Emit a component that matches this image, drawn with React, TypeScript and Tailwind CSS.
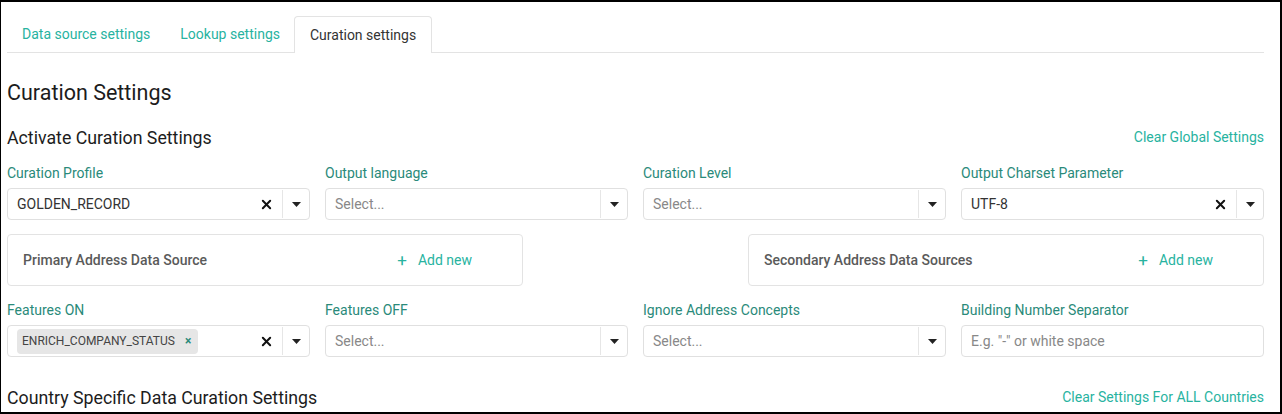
import React from 'react';

const ClearX = () => (
  <svg width="11" height="11" viewBox="0 0 12 12">
    <path d="M2 2 L10 10 M10 2 L2 10" stroke="#111" strokeWidth="2.2" strokeLinecap="round" />
  </svg>
);

const Caret = () => (
  <svg width="9" height="5" viewBox="0 0 9 5">
    <path d="M0 0 H9 L4.5 5 Z" fill="#222" />
  </svg>
);

type SelectProps = {
  value?: string;
  chip?: string;
  clearable?: boolean;
};

const SelectBox: React.FC<SelectProps> = ({ value, chip, clearable }) => (
  <div className="flex h-[32px] items-stretch rounded border border-[#e0e0e0] bg-white">
    <div className="flex flex-1 items-center px-[9px] text-[14px]">
      {chip ? (
        <span className="flex h-[25px] items-center gap-[10px] rounded-sm bg-[#e6e6e6] pl-[5px] pr-[7px] text-[12px] text-[#444]">
          {chip}
          <span className="text-[12px] font-bold text-[#2a8a7a]">×</span>
        </span>
      ) : value ? (
        <span className="text-[#333]">{value}</span>
      ) : (
        <span className="text-[#888]">Select...</span>
      )}
    </div>
    {clearable && (
      <div className="flex w-[32px] items-center justify-center">
        <ClearX />
      </div>
    )}
    <div className="my-[1px] flex w-[27px] items-center justify-center border-l border-[#e6e6e6]">
      <Caret />
    </div>
  </div>
);

const Label: React.FC<{ children: React.ReactNode }> = ({ children }) => (
  <div className="mb-[7px] text-[14px] leading-[16px] text-[#2a8a7a]">{children}</div>
);

const AddressBox: React.FC<{ title: string }> = ({ title }) => (
  <div className="flex h-[52px] w-[516px] items-center justify-between rounded border border-[#e3e3e3] pl-[15px] pr-[50px]">
    <span className="text-[14px] font-medium text-[#5a5a5a]">{title}</span>
    <span className="flex items-center gap-[11px] text-[14px] text-[#28b39f]">
      <span className="text-[17px] leading-none">+</span>
      Add new
    </span>
  </div>
);

export default function App() {
  return (
    <div
      className="h-[414px] w-[1282px] overflow-hidden border-t-2 border-l border-r-2 border-b-2 border-black bg-white"
      style={{ fontFamily: 'Roboto, "Liberation Sans", sans-serif' }}
    >
      <div className="w-[1263px] pl-[6px]">
        {/* tabs */}
        <div className="mt-[14px] flex h-[37px] border-b border-[#e3e3e3] text-[14px]">
          <div className="flex items-center px-[15px] text-[#28b39f]">Data source settings</div>
          <div className="flex items-center pl-[15px] pr-[14px] text-[#28b39f]">Lookup settings</div>
          <div className="-mb-px flex items-center rounded-t border border-b-0 border-[#e3e3e3] bg-white px-[15px] text-[#333]">
            Curation settings
          </div>
        </div>

        <h1 className="mt-[28px] text-[21.5px] leading-[24px] font-normal text-[#1c1c1c]">Curation Settings</h1>

        <div className="mt-[22px] flex items-center justify-between">
          <h2 className="text-[17.75px] leading-[20px] font-normal text-[#1c1c1c]">Activate Curation Settings</h2>
          <span className="text-[14px] text-[#28b39f]">Clear Global Settings</span>
        </div>

        <div className="mt-[17px] grid grid-cols-4 gap-x-[15px]">
          <div>
            <Label>Curation Profile</Label>
            <SelectBox value="GOLDEN_RECORD" clearable />
          </div>
          <div>
            <Label>Output language</Label>
            <SelectBox />
          </div>
          <div>
            <Label>Curation Level</Label>
            <SelectBox />
          </div>
          <div>
            <Label>Output Charset Parameter</Label>
            <SelectBox value="UTF-8" clearable />
          </div>
        </div>

        <div className="mt-[14px] flex justify-between">
          <AddressBox title="Primary Address Data Source" />
          <AddressBox title="Secondary Address Data Sources" />
        </div>

        <div className="mt-[16px] grid grid-cols-4 gap-x-[15px]">
          <div>
            <Label>Features ON</Label>
            <SelectBox chip="ENRICH_COMPANY_STATUS" clearable />
          </div>
          <div>
            <Label>Features OFF</Label>
            <SelectBox />
          </div>
          <div>
            <Label>Ignore Address Concepts</Label>
            <SelectBox />
          </div>
          <div>
            <Label>Building Number Separator</Label>
            <div className="flex h-[32px] items-center rounded border border-[#e0e0e0] px-[9px] text-[14px] text-[#888]">
              E.g. "-" or white space
            </div>
          </div>
        </div>

        <div className="mt-[30px] flex items-center justify-between">
          <h2 className="text-[17.75px] leading-[20px] font-normal text-[#1c1c1c]">Country Specific Data Curation Settings</h2>
          <span className="text-[14px] text-[#28b39f]">Clear Settings For ALL Countries</span>
        </div>
      </div>
    </div>
  );
}
